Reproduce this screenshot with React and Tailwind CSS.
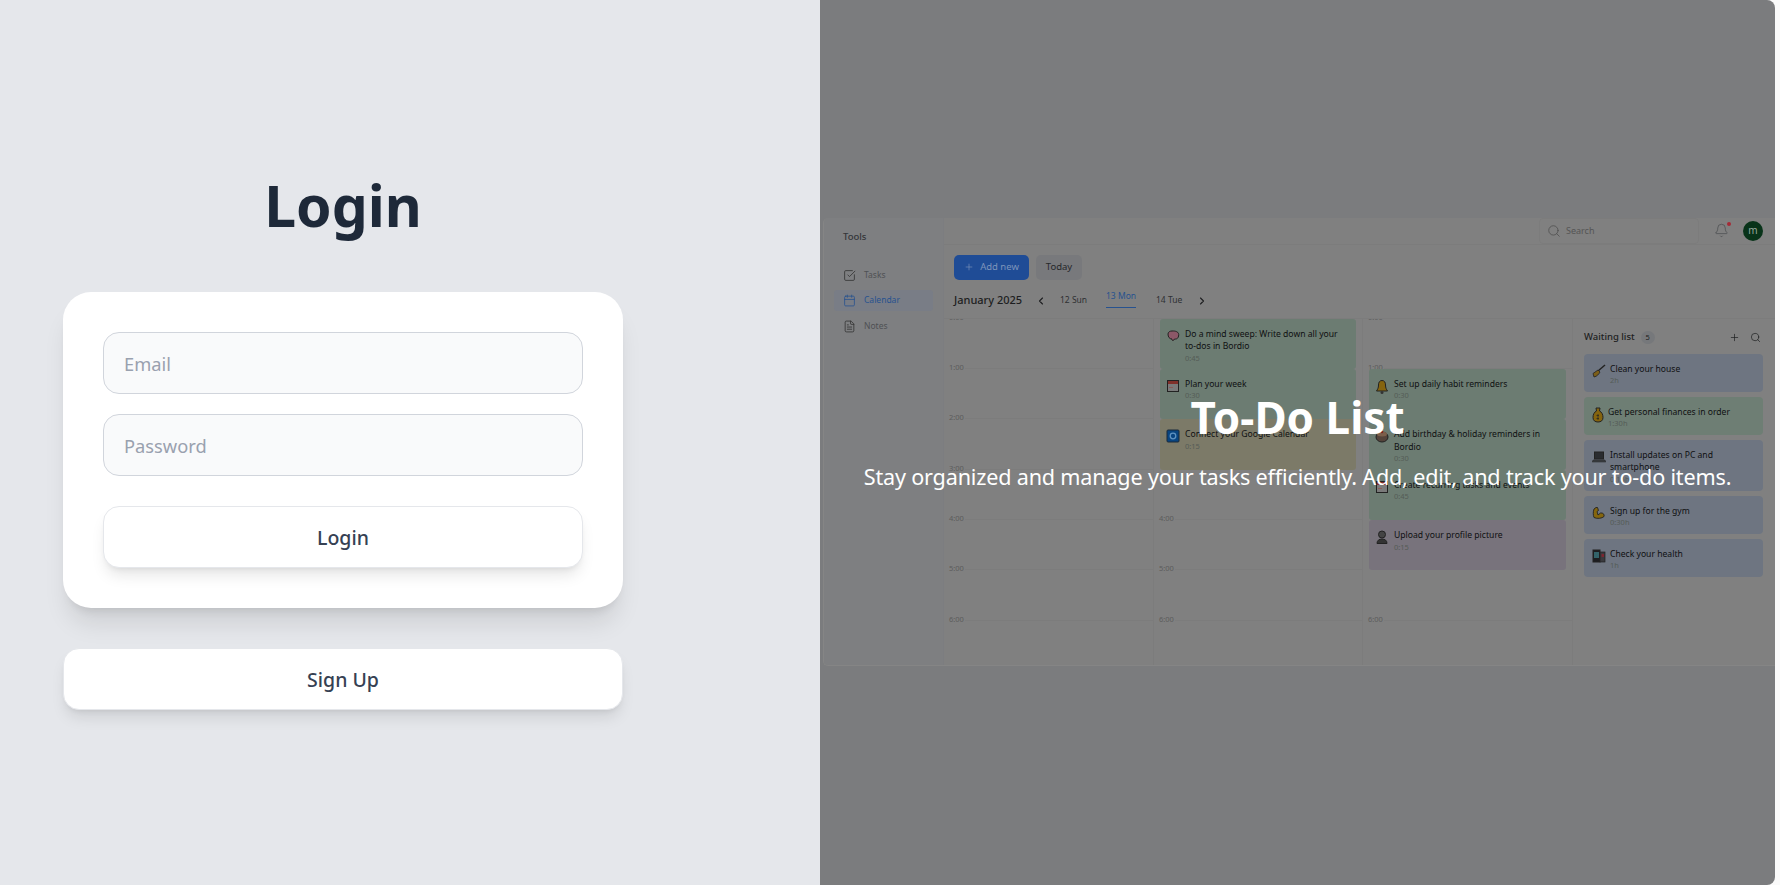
import React from "react";
import { SquareCheckBig, Calendar, FileText, Plus, ChevronLeft, ChevronRight, Search, Bell } from "lucide-react";

const Brain = () => (
  <svg viewBox="0 0 14 14" className="w-[14px] h-[14px] shrink-0"><path d="M2 5c0-2 2-3 4-3s3 0 4.500 .6C12.500 3.500 13 5 12.600 7c-.4 2-1.600 3-3 3H8.500c-.5 1.400-2 2-2.500 1-.2-.6 0-1 0-1-2.500 0-4-2-4-5z" fill="#8c5868" stroke="#222" strokeWidth="1" /></svg>
);
const Cal = ({ top = "#80302a" }) => (
  <svg viewBox="0 0 14 14" className="w-[14px] h-[14px] shrink-0"><rect x="1.500" y="1.500" width="11" height="11" fill="#7a7a7a" stroke="#222" /><rect x="2" y="2" width="10" height="3" fill={top} /><rect x="3" y="8" width="4" height="1" fill="#8a5c58" /></svg>
);
const GCal = () => (
  <svg viewBox="0 0 14 14" className="w-[14px] h-[14px] shrink-0"><rect x="1" y="1" width="12" height="12" rx="1" fill="#084480" stroke="#1b2a3a" /><circle cx="7" cy="7" r="2.800" fill="none" stroke="#5f92c0" strokeWidth="1.300" /></svg>
);
const BellE = () => (
  <svg viewBox="0 0 14 16" className="w-[14px] h-[16px] shrink-0"><path d="M7 1.500c-2.500 0-3.500 2-3.500 4.500 0 3-1 4.500-2 6h11c-1-1.500-2-3-2-6 0-2.500-1-4.500-3.500-4.500z" fill="#85640e" stroke="#222" /><circle cx="7" cy="13.500" r="1.500" fill="#333" /></svg>
);
const Cake = () => (
  <svg viewBox="0 0 14 14" className="w-[14px] h-[14px] shrink-0"><ellipse cx="7" cy="8" rx="6" ry="5" fill="#54433a" stroke="#222" /><ellipse cx="7" cy="5" rx="5" ry="2.500" fill="#7c5f4b" /><circle cx="7" cy="3" r="1.200" fill="#722" /></svg>
);
const Person = () => (
  <svg viewBox="0 0 14 14" className="w-[14px] h-[14px] shrink-0"><circle cx="7" cy="4.500" r="3.500" fill="#444" stroke="#222" /><path d="M2 13.500c0-3 2-4.500 5-4.500s5 1.500 5 4.500z" fill="#333" stroke="#222" /></svg>
);
const Broom = () => (
  <svg viewBox="0 0 14 14" className="w-[14px] h-[14px] shrink-0"><path d="M13 1 6 7" stroke="#222" strokeWidth="1.500" /><path d="M6 6 1 9.500 2 13c3-.5 5-3 6-5z" fill="#7c5e18" stroke="#222" strokeWidth=".8" /></svg>
);
const Bag = () => (
  <svg viewBox="0 0 12 16" className="w-[12px] h-[16px] shrink-0"><path d="M4 1h4L7.500 4c2.500 1 3.500 4 3.500 6.500 0 3-2 4.500-5 4.500s-5-1.500-5-4.500C1 8 2 5 4.500 4z" fill="#85640e" stroke="#222" /><path d="M6 7v6M4.500 8.500h2.500M4.500 11.500h2.500" stroke="#222" strokeWidth=".7" fill="none" /></svg>
);
const Laptop = () => (
  <svg viewBox="0 0 14 14" className="w-[14px] h-[14px] shrink-0"><rect x="2.500" y="2" width="9" height="7" fill="#2a2c30" stroke="#222" /><path d="M1 10h12l.8 2H.2z" fill="#3d4044" stroke="#222" strokeWidth=".5" /></svg>
);
const Arm = () => (
  <svg viewBox="0 0 14 14" className="w-[14px] h-[14px] shrink-0"><path d="M4 1.500 2 3c-1 3-1 6 0 8.500 3 1.500 8 1 10-1 .7-2-1-4-3.500-3.500L6 9 5 5.500l1.500-1-1-3z" fill="#85660e" stroke="#222" strokeWidth=".9" /></svg>
);
const Phone = () => (
  <svg viewBox="0 0 14 14" className="w-[14px] h-[14px] shrink-0"><rect x="1" y="1" width="7" height="12" fill="#1d1d20" stroke="#222" /><rect x="2" y="3" width="5" height="6" fill="#33636a" /><rect x="8" y="3" width="5" height="10" fill="#3a3a3e" stroke="#222" strokeWidth=".7" /><rect x="9.500" y="5" width="2.500" height="3" fill="#7c2630" /></svg>
);

const HOURS = ["1:00", "2:00", "3:00", "4:00", "5:00", "6:00"];

function Event({ icon, title, time, color }) {
  return (
    <div className={`h-full mx-[6px] rounded-[3px] pl-[6px] pr-[6px] pt-[9px] flex gap-[5px] ${color}`}>
      <div className="pt-[1px]">{icon}</div>
      <div className="min-w-0">
        <div className="text-[8.600px] leading-[12.500px] text-[#0f1011]">{title}</div>
        <div className="text-[7.500px] leading-[11px] text-[#555c57]">{time}</div>
      </div>
    </div>
  );
}

function Row({ label, event, h = "h-[50.400px]" }) {
  if (event) return <div className={`${h} shrink-0`}>{event}</div>;
  return (
    <div className={`${h} shrink-0 flex items-end pl-[5px]`}>
      {label && <span className="text-[7.500px] leading-[10px] text-[#5c5c5c] -mb-[3px] mr-[2px] w-[14px]">{label}</span>}
      {label && <div className="flex-1 border-b border-[#7c7c7c]" />}
    </div>
  );
}

function Column({ events, className, zero }) {
  return (
    <div className={`relative flex flex-col overflow-hidden border-r border-[#7c7c7c] ${className}`}>
      {zero && <span className="absolute left-[5px] -top-[7px] text-[7.500px] leading-[10px] text-[#5c5c5c]">0:00</span>}
      {HOURS.map((l, i) => <Row key={l} label={l} event={events[i]} />)}
      <Row h="h-[45px]" />
    </div>
  );
}

function WaitCard({ icon, title, time, color, h = "h-[38px]" }) {
  return (
    <div className={`${h} rounded-[4px] pl-[8px] pr-[16px] pt-[9px] flex gap-[4px] ${color}`}>
      <div className="pt-[1px]">{icon}</div>
      <div>
        <div className="text-[8.600px] leading-[12.500px] text-[#0f1011]">{title}</div>
        <div className="text-[7.500px] leading-[10px] text-[#555c57]">{time}</div>
      </div>
    </div>
  );
}

function NavItem({ icon, label, active }) {
  return (
    <div className={`h-[21px] mx-[10px] pl-[9px] flex items-center gap-[8px] rounded-[3px] ${active ? "bg-[#797d86] text-[#27528f]" : "text-[#4f5154]"}`}>
      {icon}
      <span className="text-[8.500px]">{label}</span>
    </div>
  );
}

function Screenshot() {
  const green = "bg-[#6c7c72]";
  const blue = "bg-[#6e7581]";
  return (
    <div className="w-[952px] h-[448px] flex bg-[#808080] rounded-l-[5px] overflow-hidden border-b border-l border-[#858585] mb-[2px]">
      <aside className="w-[120px] shrink-0 bg-[#7e7f81] border-r border-[#7c7d80]">
        <div className="pl-[19px] pt-[12px] h-[44px] text-[9.500px] font-medium leading-[13px] text-[#34363a]">Tools</div>
        <div className="flex flex-col gap-[4.500px] pt-[3px]">
          <NavItem icon={<SquareCheckBig size={13} strokeWidth={1.500} className="text-[#333]" />} label="Tasks" />
          <NavItem active icon={<Calendar size={13} strokeWidth={1.500} />} label="Calendar" />
          <NavItem icon={<FileText size={13} strokeWidth={1.500} className="text-[#333]" />} label="Notes" />
        </div>
      </aside>
      <main className="flex-1 flex flex-col min-w-0">
        <header className="h-[27px] shrink-0 border-b border-[#7c7c7c] flex items-center justify-end pr-[12px]">
          <div className="w-[160px] h-[26px] rounded-[4px] border border-[#7c7c7c] flex items-center gap-[5px] pl-[7px]">
            <Search size={14} strokeWidth={1.300} className="text-[#4c4c4c]" />
            <span className="text-[9px] text-[#555]">Search</span>
          </div>
          <div className="relative ml-[15px] mr-[14px] text-[#4c4f52]">
            <Bell size={15} strokeWidth={1.200} />
            <div className="absolute -top-[1px] right-[-2px] w-[4px] h-[4px] rounded-full bg-[#a52a36]" />
          </div>
          <div className="w-[20px] h-[20px] rounded-full bg-[#083319] text-[#98a89e] text-[10px] flex items-center justify-center">m</div>
        </header>
        <div className="h-[48px] shrink-0 flex items-start pl-[10px] pt-[10px] gap-[7px]">
          <div className="w-[75px] h-[25px] rounded-[5px] bg-[#1f4c96] text-[#7d94ba] text-[9.500px] flex items-center justify-center gap-[6px]">
            <Plus size={10} strokeWidth={1.500} /> Add new
          </div>
          <div className="w-[46px] h-[25px] rounded-[5px] bg-[#78797c] text-[#26282b] text-[9.500px] flex items-center justify-center">Today</div>
        </div>
        <div className="h-[26px] -mt-[5px] shrink-0 flex items-center pl-[10px] text-[#1d1e20]">
          <span className="w-[81px] text-[11px] font-medium whitespace-nowrap">January 2025</span>
          <ChevronLeft size={12} strokeWidth={2.200} />
          <span className="ml-[13px] w-[46px] text-[8.500px] text-[#2f3033]">12 Sun</span>
          <span className="self-start mt-[1px] w-[30px] text-[8.500px] text-[#27528f] border-b border-[#27528f] h-[19px] pt-[1px] text-center mr-[20px] whitespace-nowrap">13 Mon</span>
          <span className="w-[40px] text-[8.500px] text-[#2f3033]">14 Tue</span>
          <ChevronRight size={12} strokeWidth={2.200} />
        </div>
        <div className="flex-1 flex border-t border-[#7c7c7c] min-h-0 mt-[4px]">
          <Column className="w-[210px]" zero events={[]} />
          <Column className="w-[209px]" events={[
            <Event icon={<Brain />} color={green} time="0:45" title="Do a mind sweep: Write down all your to-dos in Bordio" />,
            <Event icon={<Cal />} color={green} time="0:30" title="Plan your week" />,
            <Event icon={<GCal />} color="bg-[#7c7a68]" time="0:15" title="Connect your Google Calendar" />,
          ]} />
          <Column className="w-[210px]" zero events={[
            null,
            <Event icon={<BellE />} color={green} time="0:30" title="Set up daily habit reminders" />,
            <Event icon={<Cake />} color={green} time="0:30" title="Add birthday & holiday reminders in Bordio" />,
            <Event icon={<Cal />} color={green} time="0:45" title="Create recurring tasks and events" />,
            <Event icon={<Person />} color="bg-[#78737c]" time="0:15" title="Upload your profile picture" />,
          ]} />
          <div className="flex-1 min-w-0 pl-[11px] pr-[12px] pt-[7px]">
            <div className="h-[24px] mb-[4px] flex items-center text-[#1d1e20]">
              <span className="text-[9.500px] font-medium">Waiting list</span>
              <span className="ml-[6px] w-[14px] h-[13px] rounded-full bg-[#76787b] text-[7.500px] flex items-center justify-center">5</span>
              <Plus size={11} strokeWidth={1.500} className="ml-auto" />
              <Search size={11} strokeWidth={1.500} className="ml-[10px] mr-[2px]" />
            </div>
            <div className="flex flex-col gap-[5px]">
              <WaitCard icon={<Broom />} color={blue} time="2h" title="Clean your house" />
              <WaitCard icon={<Bag />} color="bg-[#6e7e74]" time="1:30h" title="Get personal finances in order" />
              <WaitCard icon={<Laptop />} color={blue} h="h-[51px]" time="0:15h" title="Install updates on PC and smartphone" />
              <WaitCard icon={<Arm />} color={blue} time="0:30h" title="Sign up for the gym" />
              <WaitCard icon={<Phone />} color={blue} time="1h" title="Check your health" />
            </div>
          </div>
        </div>
      </main>
    </div>
  );
}

export default function App() {
  return (
    <div className="h-screen w-full flex overflow-hidden bg-[#fafafa] font-['Noto_Sans',sans-serif]">
      <section className="w-[820px] shrink-0 bg-gray-200 flex flex-col justify-center pl-[63px] pb-[1px]">
        <div className="w-[560px] flex flex-col">
          <h1 className="text-[57px] leading-[62px] font-bold text-gray-800 text-center mb-[56px]">Login</h1>
          <form className="bg-white rounded-[28px] shadow-xl p-10 flex flex-col">
            <input placeholder="Email" className="h-[62px] rounded-2xl border border-gray-300 bg-gray-50 px-5 text-[18.300px] placeholder:text-gray-400 outline-none" />
            <input placeholder="Password" className="mt-5 h-[62px] rounded-2xl border border-gray-300 bg-gray-50 px-5 text-[18.300px] placeholder:text-gray-400 outline-none" />
            <button type="button" className="mt-[30px] h-[62px] pt-[2px] rounded-2xl border border-gray-200 bg-white shadow-lg text-[19.500px] font-[550] text-gray-700">Login</button>
          </form>
          <button type="button" className="mt-10 h-[62px] pt-[2px] rounded-2xl border border-gray-200 bg-white shadow-lg text-[19.500px] font-[550] text-gray-700">Sign Up</button>
        </div>
      </section>
      <section className="relative w-[955px] shrink-0 rounded-r-[8px] overflow-hidden bg-[#7b7c7e] flex items-center justify-end">
        <Screenshot />
        <div className="absolute inset-0 flex flex-col items-center justify-center text-white">
          <h2 className="text-[44px] leading-[48px] font-bold mb-[20px]">To-Do List</h2>
          <p className="text-[21.600px] tracking-[-0.18px] leading-[32px] whitespace-nowrap">Stay organized and manage your tasks efficiently. Add, edit, and track your to-do items.</p>
        </div>
      </section>
    </div>
  );
}
